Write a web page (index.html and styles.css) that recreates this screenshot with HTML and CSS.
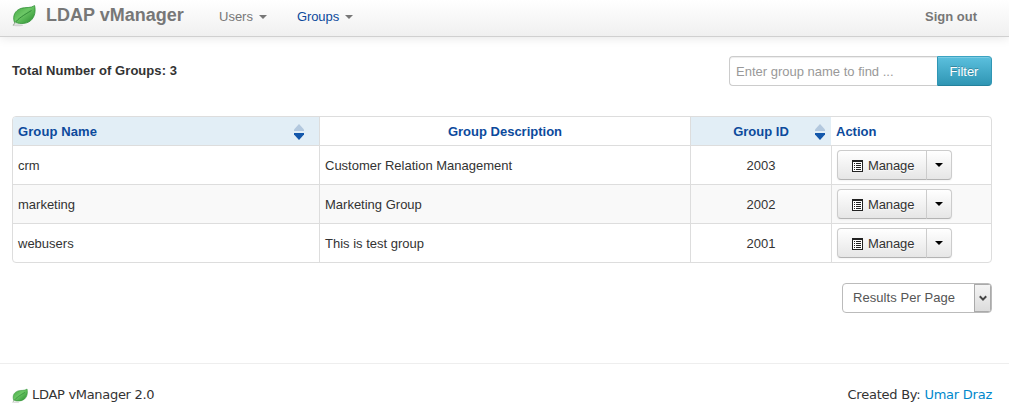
FILE: index.html
```html
<!DOCTYPE html>
<html lang="en">
<head>
<meta charset="utf-8">
<title>LDAP vManager</title>
<link rel="stylesheet" href="styles.css">
</head>
<body>
<svg class="defs" width="0" height="0" aria-hidden="true">
  <defs>
    <linearGradient id="leaf-fill" x1="0" y1="0" x2="1" y2="1">
      <stop offset="0" stop-color="#3fa33f"/>
      <stop offset=".45" stop-color="#6cc766"/>
      <stop offset="1" stop-color="#258a2b"/>
    </linearGradient>
    <symbol id="leaf" viewBox="0 0 24 22">
      <ellipse cx="6" cy="20.3" rx="5" ry="1" fill="#d4d4d4"/>
      <path d="M2.5 17.5C.3 11 2.800 5.500 9 3.400 14 1.900 18.500 3.500 22.600.6 23.800 6 23 12 18.500 15.800 14 19.300 8 18.800 3.800 17.600Z" fill="url(#leaf-fill)" stroke="#2f8f35" stroke-width=".8"/>
      <path d="M3 18C6 13.500 12 10 19.500 5.500" fill="none" stroke="#287f30" stroke-width=".8"/>
      <path d="M1 20.500L3.800 17" fill="none" stroke="#a3b5a0" stroke-width="1.200"/>
    </symbol>
    <symbol id="list" viewBox="0 0 11 12">
      <path d="M0 0h11v12H0z" fill="#222"/>
      <path d="M1 2h9v9H1z" fill="#fff"/>
      <path d="M2 3h1v1H2zM4 3h5v1H4zM2 5h1v1H2zM4 5h5v1H4zM2 7h1v1H2zM4 7h5v1H4zM2 9h1v1H2zM4 9h5v1H4z" fill="#222"/>
    </symbol>
    <symbol id="sort" viewBox="0 0 10 17">
      <path d="M5 0L10 5.500V7H0V5.500Z" fill="#b3c8de"/>
      <path d="M0 9H10V10.500L5 16L0 10.500Z" fill="#1357ab"/>
    </symbol>
  </defs>
</svg>

<header class="navbar">
  <svg class="logo"><use href="#leaf"/></svg>
  <span class="brand">LDAP vManager</span>
  <nav class="nav">
    <a class="nav-link users">Users<i class="caret"></i></a>
    <a class="nav-link active">Groups<i class="caret"></i></a>
  </nav>
  <a class="signout">Sign out</a>
</header>

<main class="content">
  <div class="toolbar">
    <strong class="total">Total Number of Groups: 3</strong>
    <form class="filter">
      <input class="filter-input" type="text" placeholder="Enter group name to find ...">
      <button class="filter-button" type="button">Filter</button>
    </form>
  </div>

  <table class="groups">
    <colgroup><col class="col-name"><col class="col-desc"><col class="col-id"><col class="col-action"></colgroup>
    <thead>
      <tr>
        <th class="sorted"><div class="head"><span class="name-label">Group Name</span><svg class="sort"><use href="#sort"/></svg></div></th>
        <th class="center">Group Description</th>
        <th class="sorted center"><div class="head"><span class="grow">Group ID</span><svg class="sort"><use href="#sort"/></svg></div></th>
        <th class="action-head">Action</th>
      </tr>
    </thead>
    <tbody>
      <tr><td>crm</td><td>Customer Relation Management</td><td class="center">2003</td>
        <td class="action"><div class="btn-group"><button class="btn"><svg class="list"><use href="#list"/></svg>Manage</button><button class="btn toggle" aria-label="More"><i class="caret dark"></i></button></div></td></tr>
      <tr><td>marketing</td><td>Marketing Group</td><td class="center">2002</td>
        <td class="action"><div class="btn-group"><button class="btn"><svg class="list"><use href="#list"/></svg>Manage</button><button class="btn toggle" aria-label="More"><i class="caret dark"></i></button></div></td></tr>
      <tr><td>webusers</td><td>This is test group</td><td class="center">2001</td>
        <td class="action"><div class="btn-group"><button class="btn"><svg class="list"><use href="#list"/></svg>Manage</button><button class="btn toggle" aria-label="More"><i class="caret dark"></i></button></div></td></tr>
    </tbody>
  </table>

  <div class="pager">
    <div class="select" role="listbox">
      <span class="select-label">Results Per Page</span>
      <span class="select-arrow"><svg width="8" height="7" viewBox="0 0 8 7"><path d="M.8 1.200L4 4.600 7.200 1.200" fill="none" stroke="#444" stroke-width="2"/></svg></span>
    </div>
  </div>
</main>

<footer class="footer">
  <div class="product"><svg class="logo-small"><use href="#leaf"/></svg><span class="product-name">LDAP vManager 2.0</span></div>
  <div class="credit">Created By: <a class="author">Umar Draz</a></div>
</footer>
</body>
</html>
```
FILE: styles.css
```css
* { box-sizing: border-box; }
body {
  margin: 0;
  height: 420px;
  overflow: hidden;
  background: #fff;
  color: #333;
  font: 13px/18px "Liberation Sans", Arial, sans-serif;
}
.defs { display: block; height: 0; }
button, input { font: inherit; margin: 0; }

.navbar {
  display: flex;
  height: 37px;
  padding: 0 32px 4px 12px;
  align-items: center;
  background: linear-gradient(#fff, #f0f0f0);
  border-bottom: 1px solid #d0d0d0;
  box-shadow: 0 1px 10px rgba(0, 0, 0, .1);
  color: #777;
}
.logo { width: 24px; height: 22px; margin-right: 10px; }
.brand { width: 173px; font-size: 18px; font-weight: bold; line-height: 20px; margin-top: -2px; }
.nav { display: flex; padding-top: 1px; }
.nav-link { display: flex; align-items: center; }
.users { width: 78px; }
.active { color: #0c4a9c; }
.nav-link.active { letter-spacing: -.1px; }
.caret {
  width: 0;
  height: 0;
  margin-left: 6px;
  border: 4px solid transparent;
  border-top-color: #777;
  border-bottom: 0;
}
.signout { margin-left: auto; padding-top: 2px; font-weight: bold; }

.content { padding: 19px 17px 0 12px; }
.toolbar { display: flex; justify-content: space-between; height: 30px; align-items: center; }
.total { letter-spacing: .05px; }
.filter { display: flex; }
.filter-input {
  width: 208px;
  height: 30px;
  padding: 4px 5px 4px 6px;
  border: 1px solid #ccc;
  border-right-width: 0;
  border-radius: 4px 0 0 4px;
  box-shadow: inset 0 1px 1px rgba(0, 0, 0, .075);
}
.filter-input::placeholder { color: #999; opacity: 1; }
.filter-button {
  width: 55px;
  height: 30px;
  padding: 1px 1px 0 0;
  color: #fff;
  text-shadow: 0 -1px 0 rgba(0, 0, 0, .25);
  background: linear-gradient(#5bc0de, #2f96b4);
  border: 1px solid;
  border-color: #3ba3c2 #2f96b4 #24819c;
  border-radius: 0 4px 4px 0;
  box-shadow: inset 0 1px 0 rgba(255, 255, 255, .2);
}

.groups {
  width: 980px;
  margin-top: 30px;
  table-layout: fixed;
  border: 1px solid #ddd;
  border-radius: 4px;
  border-spacing: 0;
  overflow: hidden;
}
.col-name { width: 306px; }
.col-desc { width: 371px; }
.col-id { width: 141px; }
.col-action { width: 160px; }
th, td { padding: 2px 5px 0; text-align: left; }
th { height: 28px; color: #0c4a9c; }
th + th, td + td { border-left: 1px solid #ddd; }
th.action-head { border-left: 0; }
td { height: 39px; border-top: 1px solid #ddd; }
td.action { padding-top: 0; }
tbody tr:nth-child(even) td { background: #f9f9f9; }
.center { text-align: center; }
.sorted { background: #e2eef6; }
.head { display: flex; justify-content: space-between; align-items: center; padding-right: 10px; }
.center .head { padding: 0 1px 0 0; }
.name-label { letter-spacing: .1px; }
.grow { flex: 1; padding-left: 11px; }
.sort { width: 10px; height: 17px; }

.btn-group { display: flex; height: 30px; border-radius: 4px; box-shadow: 0 1px 2px rgba(0, 0, 0, .05); width: 115px; }
.btn {
  display: flex;
  align-items: center;
  width: 90px;
  height: 30px;
  padding: 1px 0 0 14px;
  color: #333;
  letter-spacing: -.1px;
  text-shadow: 0 1px 1px rgba(255, 255, 255, .75);
  background: linear-gradient(#fff, #e6e6e6);
  border: 1px solid #ccc;
  border-bottom-color: #b3b3b3;
  border-radius: 4px 0 0 4px;
}
.list { width: 11px; height: 12px; margin-right: 5px; }
.toggle { width: 26px; margin-left: -1px; padding: 0; justify-content: center; border-radius: 0 4px 4px 0; }
.dark { margin: 0; border-top-color: #000; }

.pager { display: flex; justify-content: flex-end; margin-top: 20px; }
.select {
  display: flex;
  justify-content: space-between;
  width: 150px;
  height: 30px;
  border: 1px solid #bbb;
  border-radius: 4px;
  overflow: hidden;
  color: #555;
}
.select-label { padding: 5px 0 0 10px; letter-spacing: .06px; }
.select-arrow {
  display: flex;
  align-items: center;
  justify-content: center;
  width: 17px;
  background: linear-gradient(#f4f4f4, #dcdcdc);
  border: 1px solid #aaa;
}

.footer {
  display: flex;
  justify-content: space-between;
  margin-top: 50px;
  padding: 22px 17px 0 12px;
  border-top: 1px solid #eee;
  font-family: "DejaVu Sans", Verdana, sans-serif;
  letter-spacing: -.3px;
}
.credit { letter-spacing: -.24px; }
.product { display: flex; }
.logo-small { width: 16px; height: 16px; margin: 2px 4px 0 0; }
.author { color: #08c; }
```
